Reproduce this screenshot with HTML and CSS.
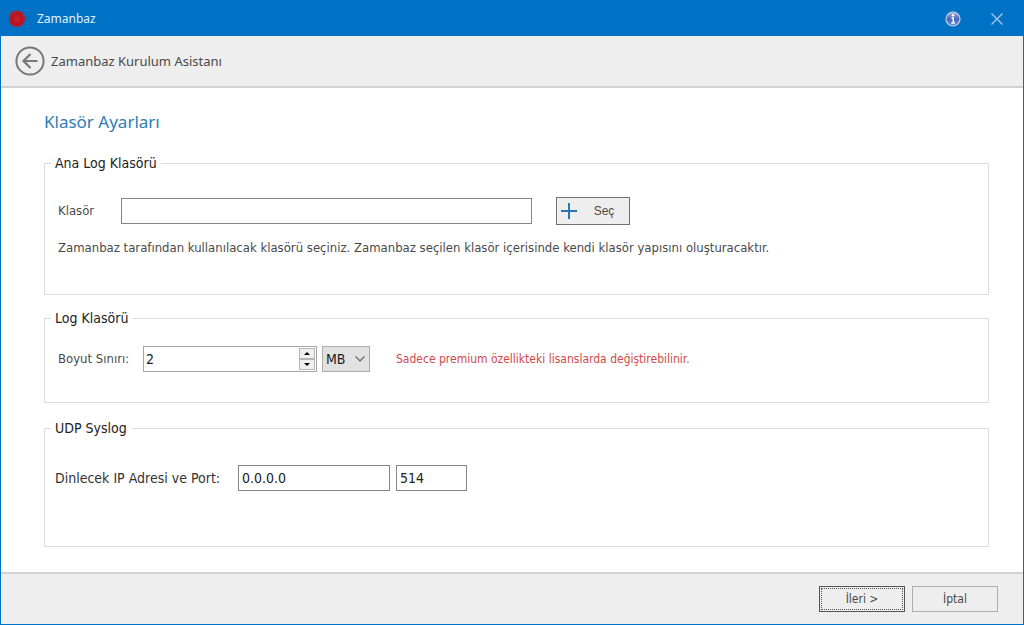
FILE: index.html
```html
<!DOCTYPE html>
<html lang="tr">
<head>
<meta charset="utf-8">
<title>Zamanbaz</title>
<link rel="stylesheet" href="styles.css">
</head>
<body>
<div class="window">
  <header class="titlebar">
    <svg class="app-icon" viewBox="0 0 18 18" aria-hidden="true">
      <defs><radialGradient id="seal"><stop offset="0" stop-color="#cb1f28"/><stop offset=".6" stop-color="#b81822"/><stop offset="1" stop-color="#a02440"/></radialGradient></defs>
      <path d="M9 .8Q11 0 12.500 1.500 15 1.500 15.500 4 17.600 5.500 17 8.500 17.800 11.500 15.800 13 15 16 12 16.300 9.500 18 7 16.800 4 17 3 14.500.6 13.500 1.200 10.500 0 8 1.500 5.800 1.400 3 4 2 6 .2 9 .8z" fill="url(#seal)"/>
      <circle cx="9" cy="8.800" r="5" fill="none" stroke="#a51420" stroke-width=".8"/>
    </svg>
    <span class="app-name">Zamanbaz</span>
    <button class="title-button" type="button" aria-label="Bilgi">
      <svg width="16" height="16" viewBox="0 0 16 16">
        <defs><linearGradient id="info" x2="0" y2="1"><stop offset="0" stop-color="#a9b9e2"/><stop offset=".5" stop-color="#4767b5"/><stop offset="1" stop-color="#7195d8"/></linearGradient></defs>
        <circle cx="8" cy="8" r="7" fill="url(#info)" stroke="#c3d0ea" stroke-width="1.200"/>
        <path d="M6.500 7h1.800v5M6.300 12h3.600" fill="none" stroke="#fff" stroke-width="1.500"/>
        <circle cx="8" cy="4.300" r="1.200" fill="#fff"/>
      </svg>
    </button>
    <button class="title-button" type="button" aria-label="Kapat">
      <svg width="14" height="14" viewBox="0 0 14 14"><path d="M1.500 1.500l11 11M12.500 1.500l-11 11" stroke="#a9cdec" stroke-width="1.300"/></svg>
    </button>
  </header>
  <div class="wizard-bar">
    <button class="back-button" type="button" aria-label="Geri">
      <svg width="30" height="30" viewBox="0 0 30 30" fill="none" stroke="#777">
        <circle cx="15" cy="15" r="13.600" stroke-width="2"/>
        <path d="M22.500 15H8.500M15.500 8l-7 7 7 7" stroke-width="2.200"/>
      </svg>
    </button>
    <span class="wizard-name">Zamanbaz Kurulum Asistanı</span>
  </div>
  <main class="content">
    <h1 class="heading">Klasör Ayarları</h1>
    <fieldset class="group group-folder">
      <legend>Ana Log Klasörü</legend>
      <div class="row">
        <label class="folder-label" for="folder">Klasör</label>
        <input class="box folder-input" id="folder" type="text">
        <button class="select-button" type="button">
          <svg width="16" height="16" viewBox="0 0 16 16"><path d="M8 0v16M0 8h16" stroke="#2c75ae" stroke-width="2"/></svg>
          <span class="select-text">Seç</span>
        </button>
      </div>
      <p class="hint">Zamanbaz tarafından kullanılacak klasörü seçiniz. Zamanbaz seçilen klasör içerisinde kendi klasör yapısını oluşturacaktır.</p>
    </fieldset>
    <fieldset class="group group-limit">
      <legend>Log Klasörü</legend>
      <div class="row">
        <label class="limit-label" for="limit">Boyut Sınırı:</label>
        <div class="box spinner">
          <input class="spinner-input" id="limit" type="text" inputmode="numeric" value="2">
          <div class="spinner-buttons">
            <button type="button" aria-label="Artır"><svg width="6" height="3" viewBox="0 0 6 3"><path d="M0 3l3-3 3 3z"/></svg></button>
            <button type="button" aria-label="Azalt"><svg width="6" height="3" viewBox="0 0 6 3"><path d="M0 0l3 3 3-3z"/></svg></button>
          </div>
        </div>
        <div class="unit">
          <select class="box unit-select" aria-label="Birim"><option>MB</option></select>
          <svg class="unit-arrow" width="10" height="6" viewBox="0 0 10 6"><path d="M.5.5L5 5 9.500.5" fill="none" stroke="#666" stroke-width="1.200"/></svg>
        </div>
        <span class="notice">Sadece premium özellikteki lisanslarda değiştirebilinir.</span>
      </div>
    </fieldset>
    <fieldset class="group group-syslog">
      <legend>UDP Syslog</legend>
      <div class="row">
        <label class="address-label" for="address">Dinlecek IP Adresi ve Port:</label>
        <input class="box address-input" id="address" type="text" value="0.0.0.0">
        <input class="box port-input" type="text" aria-label="Port" value="514">
      </div>
    </fieldset>
  </main>
  <footer class="footer">
    <button class="nav-button nav-next" type="button">İleri &gt;</button>
    <button class="nav-button" type="button">İptal</button>
  </footer>
</div>
</body>
</html>
```
FILE: styles.css
```css
* { box-sizing: border-box; }
body {
  margin: 0;
  font: 14px/20px "DejaVu Sans Condensed", "DejaVu Sans", sans-serif;
  color: #4a4a4a;
}
button, input, select { font: inherit; color: inherit; margin: 0; border-radius: 0; }
svg { display: block; flex: none; }
.window {
  display: flex;
  flex-direction: column;
  min-height: 100vh;
  background: #fff;
  border: 1px solid #0072c6;
}
.titlebar {
  display: flex;
  align-items: center;
  height: 35px;
  padding: 0 12px 0 7px;
  background: #0072c6;
}
.app-icon { width: 18px; height: 18px; }
.app-name {
  flex: 1;
  margin-left: 11px;
  color: #e4f1fb;
  font: 12px/20px "Noto Sans", sans-serif;
}
.title-button, .back-button {
  display: grid;
  place-items: center;
  padding: 0;
  border: 0;
  background: none;
}
.title-button { width: 28px; height: 28px; }
.title-button + .title-button { margin-left: 16px; }
.wizard-bar {
  display: flex;
  align-items: center;
  height: 52px;
  padding: 0 14px;
  gap: 6px;
  background: #eee;
  border-bottom: 2px solid #d2d2d2;
  font: 13px/20px "Noto Sans", sans-serif;
}
.content { flex: 1; padding: 20px 34px 25px 43px; }
.heading {
  margin: 0 0 17px;
  color: #2d7db6;
  font: 17px/28px "Noto Sans", sans-serif;
}
.group {
  min-width: 0;
  margin: 0 0 13px;
  border: 1px solid #dcdcdc;
}
.group legend { margin-left: -7px; padding: 0 4px; color: #222; }
.group-folder { padding: 24px 13px 36px; }
.group-limit { padding: 18px 13px 30px; margin-bottom: 15px; }
.group-syslog { padding: 27px 10px 55px; margin-bottom: 0; }
.group-syslog legend { margin-left: -4px; }
.row { display: flex; align-items: center; }
.box {
  height: 26px;
  padding: 0 3px;
  border: 1px solid #858585;
  background: #fff;
  color: #222;
}
.folder-label { width: 63px; font-size: 13px; }
.folder-input { flex: 0 1 411px; min-width: 0; }
.select-button {
  display: flex;
  align-items: center;
  width: 74px;
  height: 28px;
  margin-left: 24px;
  padding: 0 4px;
  border: 1px solid #707070;
  background: #eee;
}
.select-text { flex: 1; padding-left: 6px; font-family: "Liberation Sans", sans-serif; font-size: 12px; }
.hint { margin: 13px 0 0; font-size: 13px; }
.limit-label { width: 85px; font-size: 13px; }
.spinner { display: flex; width: 174px; padding: 1px; border-color: #a5a5a5; }
.spinner-input { flex: 1; min-width: 0; padding: 0 1px; border: 0; background: none; }
.spinner-buttons { display: flex; flex-direction: column; width: 16px; }
.spinner-buttons button {
  display: grid;
  place-items: center;
  flex: 1;
  padding: 0;
  border: 1px solid #b5b5b5;
  background: #f0f0f0;
  color: #111;
}
.unit { position: relative; margin-left: 5px; }
.unit-select { width: 48px; appearance: none; border-color: #adadad; background: #e1e1e1; }
.unit-arrow { position: absolute; right: 5px; top: 10px; pointer-events: none; }
.notice { margin-left: 26px; color: #d04a4a; font-size: 12px; }
.address-label { width: 183px; color: #333; }
.address-input { width: 152px; }
.port-input { width: 71px; margin-left: 6px; }
.footer {
  display: flex;
  justify-content: flex-end;
  gap: 7px;
  padding: 12px 25px;
  border-top: 2px solid #d2d2d2;
  background: #eee;
}
.nav-button {
  width: 86px;
  height: 26px;
  padding: 0;
  border: 1px solid #adadad;
  background: #eee;
  font-size: 12px;
}
.nav-next { border-color: #555; outline: 1px dotted #555; outline-offset: -3px; }
```
